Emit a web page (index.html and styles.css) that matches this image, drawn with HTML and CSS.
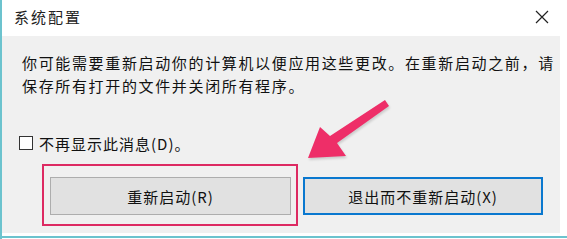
FILE: index.html
```html
<!DOCTYPE html>
<html lang="zh-CN">
<head>
<meta charset="UTF-8">
<meta name="viewport" content="width=device-width, initial-scale=1.0">
<title>系统配置</title>
<link rel="stylesheet" href="styles.css">
</head>
<body>
<div class="window">
    <div class="titlebar">
        <span class="title">系统配置</span>
        <span class="close">
            <svg width="14" height="14" viewBox="0 0 14 14"><path d="M1 1L13 13M13 1L1 13" stroke="#222" stroke-width="1.2" fill="none"/></svg>
        </span>
    </div>
    <div class="content">
        <p class="message">你可能需要重新启动你的计算机以便应用这些更改。在重新启动之前，请<br>保存所有打开的文件并关闭所有程序。</p>
        <label class="check-row"><span class="checkbox"></span>不再显示此消息(D)。</label>
        <div class="buttons">
            <div class="highlight">
                <div class="btn">重新启动(R)</div>
            </div>
            <div class="btn btn-default">退出而不重新启动(X)</div>
        </div>
    </div>
    <div class="frame-bottom"></div>

    <svg class="arrow" width="567" height="239" viewBox="0 0 567 239">
        <polygon points="308,158 320,127 330,136 385,100 389,106 337,143 346,156" fill="#ee2e68"/>
    </svg>
</div>
</body>
</html>
```

FILE: styles.css
```css
body {
    margin: 0;
    font-family: "Noto Sans CJK SC", "Noto Sans", sans-serif;
    color: #111;
    background: #ffffff;
}
.window {
    position: relative;
    width: 567px;
    height: 239px;
    background: #ffffff;
    border-left: 2px solid #6cc3ce;
    box-sizing: border-box;
    overflow: hidden;
}
.titlebar {
    height: 36px;
    display: flex;
    align-items: center;
    justify-content: space-between;
    padding: 0 18px 4px 12px;
    box-sizing: border-box;
}
.title {
    font-size: 15px;
    letter-spacing: 2px;
    color: #222;
}
.close {
    display: flex;
    margin-top: 2px;
}
.content {
    width: 558px;
    height: 197px;
    background: #f0f0f0;
    padding: 15px 0 0 20px;
    box-sizing: border-box;
}
.message {
    margin: 0;
    font-size: 15px;
    line-height: 23px;
    letter-spacing: 1.65px;
}
.check-row {
    display: flex;
    align-items: center;
    height: 22px;
    margin: 35px 0 0 -3px;
    font-size: 15px;
    letter-spacing: 1px;
}
.checkbox {
    width: 12px;
    height: 12px;
    border: 1px solid #333;
    background: #fff;
    margin-right: 6px;
}
.buttons {
    display: flex;
    align-items: flex-start;
    gap: 5px;
    margin: 10px 0 0 20px;
}
.highlight {
    width: 256px;
    height: 62px;
    border: 2px solid #dd2a62;
    box-sizing: border-box;
    padding: 11px 0 0 6px;
}
.btn {
    width: 241px;
    height: 38px;
    display: flex;
    align-items: center;
    justify-content: center;
    background: #e1e1e1;
    border: 1px solid #adadad;
    box-sizing: border-box;
    font-size: 15px;
    letter-spacing: 1px;
}
.btn-default {
    width: 240px;
    margin-top: 13px;
    border: 2px solid #0a78cf;
}
.frame-bottom {
    height: 3px;
    width: 100%;
    border-bottom: 2px solid #6cc3ce;
}
.arrow {
    position: absolute;
    left: -2px;
    top: 0;
    pointer-events: none;
    filter: drop-shadow(1px 2px 1px rgba(0,0,0,0.15));
}
```
